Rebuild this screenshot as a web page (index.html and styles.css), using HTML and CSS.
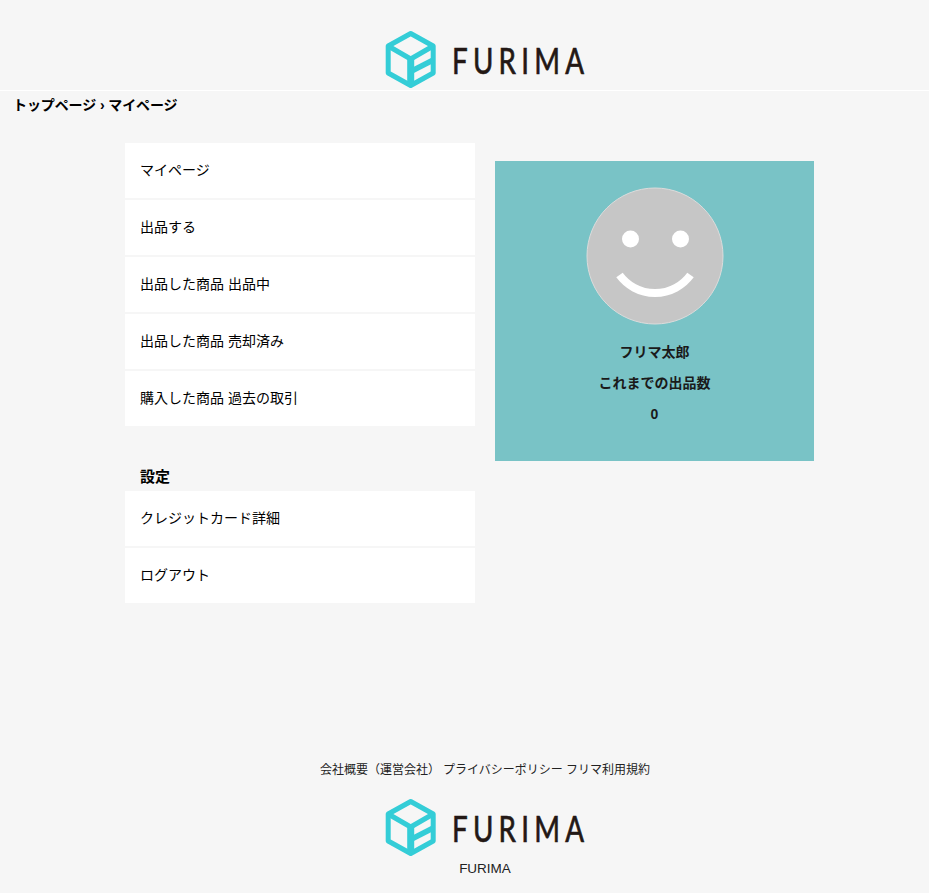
FILE: index.html
```html
<!DOCTYPE html>
<html lang="ja">
<head>
  <meta charset="UTF-8" />
  <meta name="viewport" content="width=device-width, initial-scale=1.0" />
  <title>マイページ - FURIMA</title>
  <link rel="stylesheet" href="styles.css">
</head>
<body>
  <header class="site-header">
    <a class="logo" href="#">
      <svg class="logo-icon" viewBox="0 0 52 58" width="52" height="58">
        <g fill="none" stroke="#34cdd7" stroke-width="5" stroke-linejoin="round">
          <path d="M25.700 3.500 L48.200 16 V43 L25.700 55.500 L3.200 43 V16 Z" />
          <path d="M3.200 16 L25.700 29 L48.200 16" />
          <path d="M25.700 29 V55.500" stroke-width="7" />
          <path d="M25.700 41.500 L48.200 30" stroke-width="5.500" />
        </g>
      </svg>
      <span class="logo-text">FURIMA</span>
    </a>
  </header>

  <nav class="breadcrumb">トップページ › マイページ</nav>

  <main class="mypage">
    <div class="side-menu">
      <ul class="menu-list">
        <li><a href="#">マイページ</a></li>
        <li><a href="#">出品する</a></li>
        <li><a href="#">出品した商品 出品中</a></li>
        <li><a href="#">出品した商品 売却済み</a></li>
        <li><a href="#">購入した商品 過去の取引</a></li>
      </ul>
      <h2 class="menu-title">設定</h2>
      <ul class="menu-list">
        <li><a href="#">クレジットカード詳細</a></li>
        <li><a href="#">ログアウト</a></li>
      </ul>
    </div>

    <section class="profile">
      <svg class="avatar" viewBox="0 0 138 138" width="138" height="138">
        <circle cx="69" cy="69" r="68" fill="#c6c6c6" stroke="#dcdcdc" stroke-width="1" />
        <circle cx="44.500" cy="52" r="8.500" fill="#fff" />
        <circle cx="94.500" cy="52" r="8.500" fill="#fff" />
        <path d="M33.500 88 A44 44 0 0 0 104.500 88" fill="none" stroke="#fff" stroke-width="8" />
      </svg>
      <p class="profile-line profile-name">フリマ太郎</p>
      <p class="profile-line">これまでの出品数</p>
      <p class="profile-line">0</p>
    </section>
  </main>

  <footer class="site-footer">
    <ul class="footer-links">
      <li><a href="#">会社概要（運営会社）</a></li>
      <li><a href="#">プライバシーポリシー</a></li>
      <li><a href="#">フリマ利用規約</a></li>
    </ul>
    <a class="logo" href="#">
      <svg class="logo-icon" viewBox="0 0 52 58" width="52" height="58">
        <g fill="none" stroke="#34cdd7" stroke-width="5" stroke-linejoin="round">
          <path d="M25.700 3.500 L48.200 16 V43 L25.700 55.500 L3.200 43 V16 Z" />
          <path d="M3.200 16 L25.700 29 L48.200 16" />
          <path d="M25.700 29 V55.500" stroke-width="7" />
          <path d="M25.700 41.500 L48.200 30" stroke-width="5.500" />
        </g>
      </svg>
      <span class="logo-text">FURIMA</span>
    </a>
    <p class="copyright">FURIMA</p>
  </footer>
</body>
</html>
```

FILE: styles.css
```css
* {
  box-sizing: border-box;
}

body {
  margin: 0;
  height: 893px;
  background-color: #f6f6f6;
  color: #000;
  font-family: "Liberation Sans", "Noto Sans CJK JP", sans-serif;
  font-size: 14px;
}

a {
  color: inherit;
  text-decoration: none;
}

ul {
  list-style: none;
  margin: 0;
  padding: 0;
}

.site-header {
  height: 91px;
  padding: 30px 0 0 41px;
  display: flex;
  justify-content: center;
  border-bottom: 1px solid #fff;
}

.logo {
  display: flex;
  align-items: center;
  width: 200px;
  height: 58px;
}

.logo-icon {
  flex: none;
}

.logo-text {
  margin-left: 15px;
  color: #231815;
  font-family: "Lato", sans-serif;
  font-size: 37px;
  line-height: 1;
  letter-spacing: 7px;
  -webkit-text-stroke: 0.7px #231815;
  transform: scaleX(0.75);
  transform-origin: left center;
}

.breadcrumb {
  height: 29px;
  padding: 6px 13px 0;
  font-weight: bold;
  line-height: 17px;
  letter-spacing: -0.1px;
}

.mypage {
  display: flex;
  align-items: flex-start;
  gap: 20px;
  padding: 23px 0 0 125px;
}

.side-menu {
  width: 350px;
}

.menu-list li {
  height: 57px;
  background-color: #fff;
  border-bottom: 2px solid #f6f6f6;
}

.menu-list li:last-child {
  height: 55px;
  border-bottom: 0;
}

.menu-list a {
  display: block;
  padding: 0 15px;
  line-height: 55px;
}

.menu-title {
  margin: 41px 0 0;
  padding: 0 15px;
  height: 24px;
  font-size: 15px;
  line-height: 20px;
}

.profile {
  width: 319px;
  height: 300px;
  margin-top: 18px;
  padding-top: 26px;
  background-color: #79c3c6;
  text-align: center;
  color: #1a1a1a;
}

.avatar {
  display: block;
  margin: 0 auto 12px;
}

.profile-line {
  margin: 0;
  height: 31px;
  font-weight: bold;
  line-height: 31px;
}

.site-footer {
  margin-top: 158px;
  padding-left: 41px;
  text-align: center;
  font-size: 12px;
  color: #222;
}

.footer-links {
  display: flex;
  justify-content: center;
  gap: 3px;
  height: 37px;
  line-height: 18px;
}

.site-footer .logo {
  margin: 0 auto;
}

.copyright {
  margin: 4px 0 0;
  font-size: 13.5px;
  line-height: 18px;
}
```
